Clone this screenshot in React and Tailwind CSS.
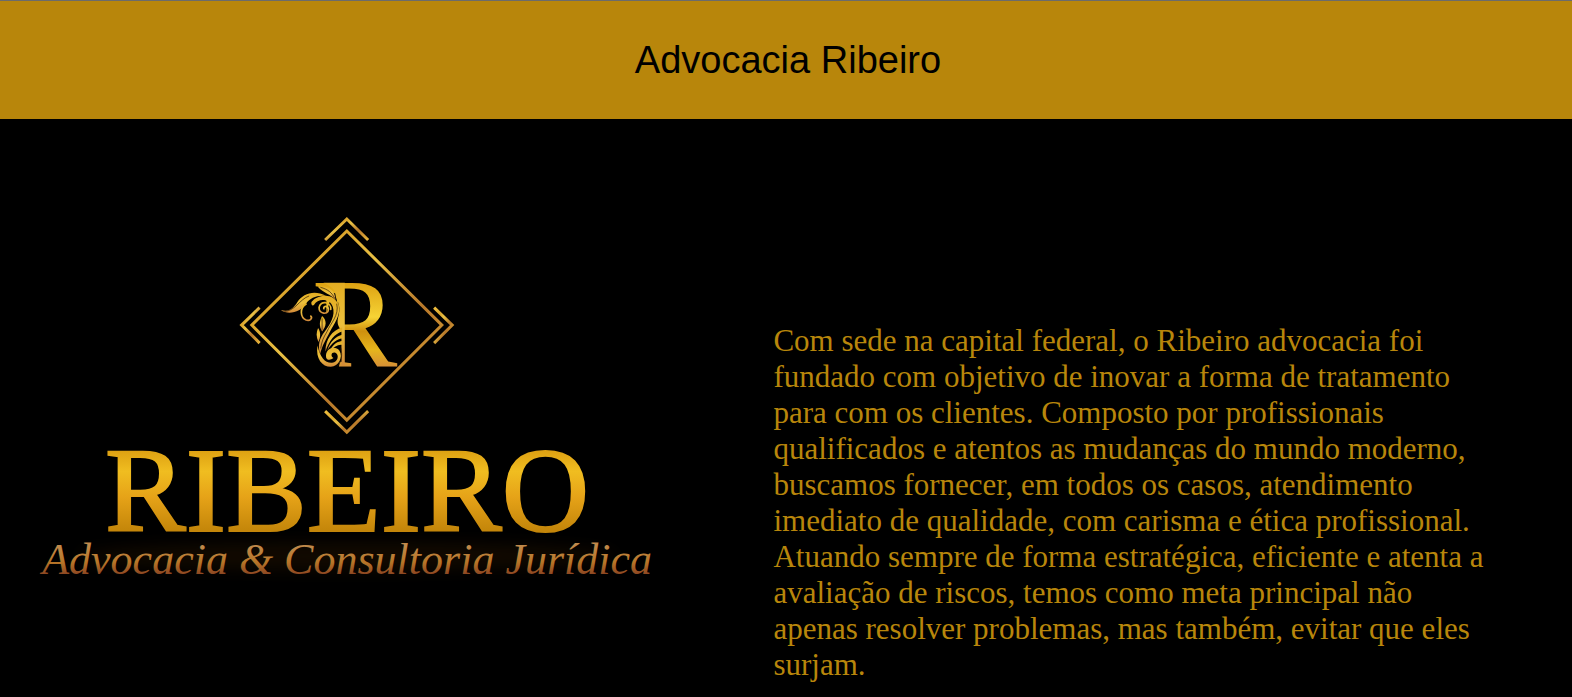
function Ornament() {
  return (
    <g transform="translate(270 270) scale(0.3333)" strokeLinecap="round" strokeLinejoin="round">
      <path fill="#000" d="M150 56L196 70L206 120L210 160L210 270L206 292L170 292L136 240L160 160L180 90ZM124 270L170 270L196 300L124 300Z" />
      <g fill="url(#leaf)">
        <path d="M32 120C58 127 69 116 82 96C98 70 134 58 168 78C142 74 120 84 108 100C92 126 56 136 32 120Z" />
        <path d="M143 50C172 44 196 60 196 90C184 72 160 70 143 50Z" />
        <path d="M160 38L224 38L224 286L214 286L214 180C204 170 200 158 204 142C212 116 206 96 197 80C198 60 186 50 160 38Z" />
        <path d="M124 96C144 70 196 68 206 108C212 138 192 160 178 188C166 212 158 222 150 252C142 226 148 204 164 184C182 160 196 136 188 110C180 84 142 84 132 104C128 110 122 104 124 96Z" />
        <path d="M156 138C170 150 170 168 156 184C146 168 148 154 156 138Z" />
        <path d="M144 174C152 186 152 200 145 216C138 200 138 186 144 174Z" />
        <path d="M166 244C166 208 186 180 216 172L216 184C194 190 178 210 166 244Z" />
        <path d="M172 240C180 214 198 198 216 194L216 205C200 206 186 218 172 240Z" />
        <path d="M176 246C190 220 204 214 216 213L216 224C204 222 190 230 176 246Z" />
        <path d="M168 262C164 236 194 224 208 242C220 262 206 288 182 290C156 290 136 266 142 226C150 262 166 280 186 278C204 276 208 254 196 248C184 244 180 258 190 264C180 272 170 270 168 262Z" />
      </g>
      <g fill="none" stroke="url(#leaf)" strokeWidth="5">
        <path d="M108 102C88 114 90 142 108 150C120 154 128 144 122 138" />
        <path d="M182 118C184 94 150 90 147 112C146 132 174 136 175 118C174 106 160 106 161 116" />
      </g>
      <g fill="none" stroke="#2a1600" strokeWidth="2">
        <path d="M44 124C74 124 88 88 116 78" />
        <path d="M152 52C174 58 186 68 193 84" />
        <path d="M200 102C208 136 182 158 170 186C160 202 154 216 152 234" />
        <path d="M156 146L156 178" />
        <path d="M212 234C218 256 214 276 202 288" />
      </g>
    </g>
  );
}

function Logo() {
  return (
    <svg
      viewBox="0 119 660 578"
      className="block h-auto w-full"
      role="img"
      aria-label="Ribeiro Advocacia & Consultoria Jurídica"
    >
      <defs>
        <linearGradient id="frame" x1="0" y1="0" x2="1" y2="1">
          <stop offset="0" stopColor="#f0c040" />
          <stop offset="0.25" stopColor="#dba52c" />
          <stop offset="0.4" stopColor="#e8c044" />
          <stop offset="0.65" stopColor="#b8782a" />
          <stop offset="1" stopColor="#e8b53a" />
        </linearGradient>
        <linearGradient id="leaf" x1="0" y1="0" x2="0" y2="1">
          <stop offset="0" stopColor="#e3ad22" />
          <stop offset="0.5" stopColor="#ecc03c" />
          <stop offset="1" stopColor="#d28a3a" />
        </linearGradient>
        <linearGradient id="monogram" x1="0" y1="0" x2="0" y2="1">
          <stop offset="0.2" stopColor="#dca011" />
          <stop offset="0.45" stopColor="#f6d335" />
          <stop offset="0.55" stopColor="#cf900e" />
          <stop offset="0.68" stopColor="#e5b51c" />
          <stop offset="0.82" stopColor="#d3893a" />
        </linearGradient>
        <linearGradient id="name" x1="0" y1="0" x2="0" y2="1">
          <stop offset="0.2" stopColor="#dda012" />
          <stop offset="0.36" stopColor="#f0bd20" />
          <stop offset="0.55" stopColor="#e6a318" />
          <stop offset="0.8" stopColor="#c4860a" />
        </linearGradient>
        <linearGradient id="tagline" x1="0" y1="0" x2="0" y2="1">
          <stop offset="0.2" stopColor="#c08a4c" />
          <stop offset="0.55" stopColor="#b87628" />
          <stop offset="0.8" stopColor="#8c4622" />
        </linearGradient>
        <filter id="glow" x="-10%" y="-60%" width="120%" height="220%">
          <feGaussianBlur stdDeviation="8" />
        </filter>
      </defs>

      <g fill="none" stroke="url(#frame)" strokeWidth="3">
        <path d="M346.7 231L441.7 325L346.7 420L251.7 325Z" />
        <path d="M325 240L346.7 219L368 240" />
        <path d="M259.5 307.5L241.5 325L259.5 343" />
        <path d="M434 307.5L452 325L434 343" />
        <path d="M325 411L346.7 432L368 411" />
      </g>

      <text x="312" y="367" fontSize="128" fill="url(#monogram)" className="font-['Liberation_Serif',serif]">
        R
      </text>
      <Ornament />

      <ellipse cx="347" cy="556" rx="270" ry="14" fill="#5a3000" opacity="0.2" filter="url(#glow)" />
      <text
        x="347"
        y="531"
        textAnchor="middle"
        fontSize="121"
        fill="url(#name)"
        stroke="url(#name)"
        strokeWidth="2"
        className="font-['Liberation_Serif',serif]"
      >
        RIBEIRO
      </text>
      <text
        x="347"
        y="574"
        textAnchor="middle"
        fontSize="44"
        fill="url(#tagline)"
        className="font-['Liberation_Serif',serif] italic"
      >
        Advocacia &amp; Consultoria Jurídica
      </text>
    </svg>
  );
}

export default function App() {
  return (
    <div className="min-h-screen bg-black">
      <header className="border-t border-[#6b6b6b] bg-[#b8860b] px-4 py-9 text-center">
        <h1 className="pl-1 font-['Liberation_Sans',Arial,sans-serif] text-[38px] leading-[46px] text-black">
          Advocacia Ribeiro
        </h1>
      </header>
      <main className="flex items-end justify-between">
        <div className="w-[42%] shrink-0">
          <Logo />
        </div>
        <p className="mr-[5%] w-[45.8%] pb-3.5 font-['Liberation_Serif','Times_New_Roman',serif] text-[31px] leading-9 text-[#b8860b]">
          Com sede na capital federal, o Ribeiro advocacia foi fundado com objetivo de inovar a forma
          de tratamento para com os clientes. Composto por profissionais qualificados e atentos as
          mudanças do mundo moderno, buscamos fornecer, em todos os casos, atendimento imediato de
          qualidade, com carisma e ética profissional. Atuando sempre de forma estratégica, eficiente
          e atenta a avaliação de riscos, temos como meta principal não apenas resolver problemas, mas
          também, evitar que eles surjam.
        </p>
      </main>
    </div>
  );
}
